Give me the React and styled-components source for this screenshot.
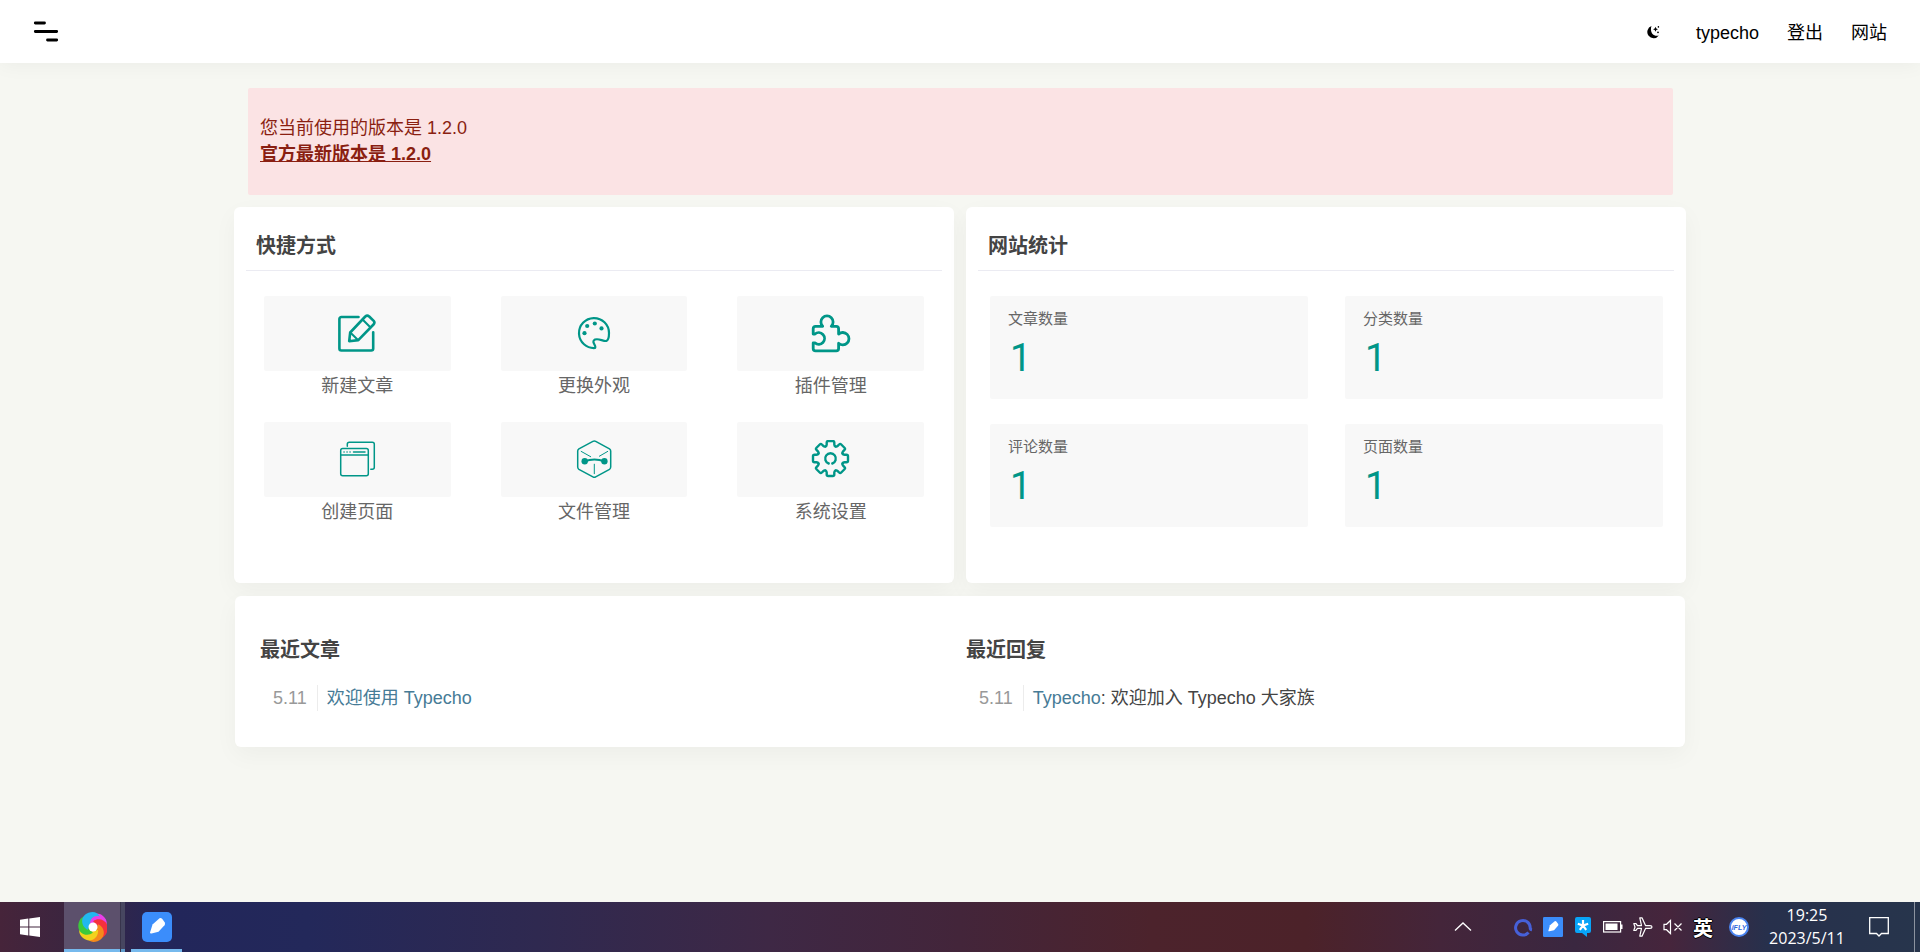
import styled, { createGlobalStyle } from "styled-components";

const GlobalStyle = createGlobalStyle`
  * {
    box-sizing: border-box;
  }

  body {
    margin: 0;
    background-color: #f6f7f2;
    color: #444;
    font-family: "Liberation Sans", Arial, "Noto Sans CJK SC", sans-serif;
    font-size: 18px;
    font-weight: 400;
    line-height: 26px;
  }

  a {
    text-decoration: none;
  }

  ul {
    margin: 0;
    padding: 0;
    list-style: none;
  }
`;

const Page = styled.div`
  display: flex;
  flex-direction: column;
  min-height: 100vh;
`;

// Top bar
const Header = styled.header`
  display: flex;
  align-items: center;
  justify-content: space-between;
  height: 63px;
  padding: 0 33px;
  background-color: #fff;
  color: #000;
  box-shadow: 0 1px 20px rgba(0, 0, 0, 0.05);
`;

const IconButton = styled.button`
  display: flex;
  align-items: center;
  justify-content: center;
  padding: 0;
  border: none;
  background: none;
  color: inherit;
  cursor: pointer;
`;

const Nav = styled.nav`
  display: flex;
  align-items: center;
  gap: 28px;

  a {
    padding-top: 2px;
    color: inherit;
  }

  button {
    margin-right: 8px;
  }
`;

// Content
const Main = styled.main`
  display: flex;
  flex: 1;
  flex-direction: column;
  gap: 12px;
  width: 100%;
  max-width: 1452px;
  margin: 0 auto;
  padding: 25px 0;
`;

const Notice = styled.div`
  margin: 0 13px 0 14px;
  padding: 27px 12px 28px;
  border-radius: 2px;
  background-color: #fbe3e4;
  color: #8a1f11;

  p {
    margin: 0;
  }

  a {
    color: inherit;
    font-weight: 700;
    text-decoration: underline;
  }
`;

const Columns = styled.div`
  display: grid;
  grid-template-columns: 1fr 1fr;
  gap: 12px;
`;

const Card = styled.section`
  padding: 12px 12px 56px;
  border-radius: 6px;
  background-color: #fff;
  box-shadow: 0 8px 25px rgba(0, 0, 0, 0.04);
`;

const CardTitle = styled.h3`
  margin: 0;
  padding: 14px 10px 11px;
  border-bottom: 1px solid #ebebf2;
  font-size: 20px;
  font-weight: 700;
`;

const Shortcuts = styled.ul`
  display: grid;
  grid-template-columns: repeat(3, 1fr);
  gap: 23px 50px;
  padding: 25px 18px 0;
`;

const Shortcut = styled.a`
  display: block;
  color: #666;
  text-align: center;
`;

const ShortcutIcon = styled.span`
  display: flex;
  align-items: center;
  justify-content: center;
  height: 75px;
  margin-bottom: 2px;
  border-radius: 2px;
  background-color: #f8f8f8;
  color: #009688;
`;

const Stats = styled.div`
  display: grid;
  grid-template-columns: 1fr 1fr;
  gap: 25px 37px;
  padding: 25px 11px 0 12px;
`;

const Stat = styled.div`
  height: 103px;
  padding: 10px 18px;
  border-radius: 2px;
  background-color: #f8f8f8;
`;

const StatLabel = styled.div`
  color: #666;
  font-size: 15px;
`;

const StatValue = styled.div`
  padding-left: 2px;
  color: #009688;
  font-family: Roboto, "Noto Sans", sans-serif;
  font-size: 38px;
  line-height: 52px;
`;

const RecentCard = styled(Card)`
  display: grid;
  grid-template-columns: 1fr 1fr;
  gap: 12px;
  margin: 1px 1px 0;
  padding: 41px 25px 36px;
`;

const RecentTitle = styled.h3`
  margin: 0 0 22px;
  font-size: 20px;
  font-weight: 700;
`;

const RecentItem = styled.li`
  display: flex;
  padding-left: 13px;

  time {
    margin-right: 9px;
    padding-right: 10px;
    border-right: 1px solid #ececec;
    color: #999;
  }

  a {
    color: #467b96;
  }
`;

// Desktop taskbar
const Taskbar = styled.footer`
  display: flex;
  justify-content: space-between;
  height: 50px;
  background: linear-gradient(
    90deg,
    #46243a 0%,
    #3a2540 4%,
    #22265a 9%,
    #23285a 16%,
    #2f2950 28%,
    #3e2845 40%,
    #43253a 50%,
    #4c232c 60%,
    #4c2229 68%,
    #44253a 75%,
    #3a2740 82%,
    #46253c 87%,
    #27304c 92%,
    #27354c 100%
  );
  color: #fff;
`;

const TaskGroup = styled.div`
  display: flex;
`;

const TaskButton = styled(IconButton)`
  width: ${(props) => props.$width}px;
  margin-right: ${(props) => props.$gap || 0}px;
  background-color: ${(props) => (props.$active ? "#5c506c" : "transparent")};
  box-shadow: ${(props) => (props.$running ? "inset 0 -3px #76b9ed" : "none")};
`;

const TaskEdge = styled.span`
  width: 5px;
  margin-right: 6px;
  border-left: 1px solid #38344c;
  background-color: #474660;
  box-shadow: inset 0 -3px #5f9bcb;
`;

const Tray = styled.div`
  display: flex;
  align-items: center;
`;

const TrayIcons = styled.div`
  display: flex;
  align-items: center;
  gap: 10px;
  margin-right: 16px;
`;

const TrayButton = styled(IconButton)`
  width: 20px;
  height: 50px;
  margin-right: ${(props) => props.$gap || 0}px;
`;

const InputMode = styled(TrayButton)`
  font-family: "Noto Sans CJK SC", sans-serif;
  font-size: 20px;
  font-weight: 700;
  text-shadow: 1px 0 #000, -1px 0 #000, 0 1px #000, 0 -1px #000;
`;

const Badge = styled.span`
  display: flex;
  align-items: center;
  justify-content: center;
  flex-shrink: 0;
  width: 20px;
  height: 20px;
  border: 2px solid #4a84f0;
  border-radius: 50%;
  background-color: #fff;
  color: #2f66dc;
  font-family: "Liberation Sans", Arial, sans-serif;
  font-size: 7px;
  font-style: italic;
  font-weight: 700;
`;

const Clock = styled.time`
  width: 84px;
  margin-right: 20px;
  font-family: "Open Sans", "Noto Sans", sans-serif;
  font-size: 16px;
  line-height: 23px;
  text-align: center;
`;

const ShowDesktop = styled.button`
  width: 6px;
  height: 50px;
  margin-left: 25px;
  padding: 0;
  border: none;
  border-left: 1px solid #8c939f;
  background: none;
`;

const LineIcon = styled.svg.attrs({ viewBox: "0 0 40 40" })`
  width: 40px;
  height: 40px;
  fill: none;
  stroke: currentColor;
  stroke-width: ${(props) => props.$weight || 2.4};
  stroke-linecap: round;
  stroke-linejoin: round;

  .solid {
    fill: currentColor;
    stroke: none;
  }
`;

const EditIcon = () => (
  <LineIcon $weight={2.6}>
    <path d="M21.500 3H4.400a2 2 0 0 0-2 2v29.500a2 2 0 0 0 2 2h29.800a2 2 0 0 0 2-2V18.200" />
    <path d="M12.200 27.200 13.200 18.500 28.300 2.500Q30.200.9 32.200 2.500L36.700 6.900Q38.200 8.700 36.500 10.500L21.300 26.100Z" />
    <path d="M25.800 5.700 33.300 13.300M13.800 19 21 26" strokeWidth="2" />
  </LineIcon>
);

const PaletteIcon = () => (
  <LineIcon $weight={2.2}>
    <path d="M21 34A15 15 0 1 1 35 19C35 23.500 33.800 26.500 32.300 27C29 27.400 24.500 24 21 25.600C16.500 27.800 23 32 21 34Z" />
    <g className="solid">
      <circle cx="10.500" cy="19.200" r="2.100" />
      <circle cx="13.200" cy="12" r="2.100" />
      <circle cx="20.800" cy="9.500" r="2.100" />
      <circle cx="27.500" cy="14.400" r="2.100" />
    </g>
  </LineIcon>
);

const PuzzleIcon = () => (
  <LineIcon $weight={2.8}>
    <path d="M4 20H2.200V14.700a2.400 2.400 0 0 1 2.400-2.400H11.700A6.100 6.100 0 1 1 20.300 12.300H25.200a2.400 2.400 0 0 1 2.400 2.400V20.100A6.200 6.200 0 1 1 27.600 29.300V34.500a2.400 2.400 0 0 1-2.400 2.400H4.600a2.400 2.400 0 0 1-2.400-2.400V28.900H4A5.800 5.800 0 1 0 4 20" />
  </LineIcon>
);

const WindowsIcon = () => (
  <LineIcon $weight={1.5}>
    <rect x="3.700" y="8.500" width="27.600" height="27.200" rx="2" />
    <path d="M3.700 14.900H31.300M16.500 11.900H28M7 11.900h.1M10 11.900h.1M13 11.900h.1" />
    <path d="M10.300 6.200V4.200a2 2 0 0 1 2-2H35.300a2 2 0 0 1 2 2V27.200a2 2 0 0 1-2 2H33.800" />
  </LineIcon>
);

const BoxIcon = () => (
  <LineIcon $weight={1.5}>
    <path d="M18.900 1.300Q20.300.5 21.700 1.300L35.500 8.900Q36.700 9.700 36.700 11.100V27.100Q36.700 28.500 35.500 29.300L21.700 36.900Q20.300 37.700 18.900 36.900L4.900 29.300Q3.700 28.500 3.700 27.100V11.100Q3.700 9.700 4.900 8.900Z" />
    <path d="M7.200 11.400 16.700 16.700M33.700 11.400 25.400 16.200M20.300 24.200V33.700" strokeWidth="1" />
    <path d="M10.700 21.200Q20.300 17.700 30.400 21.200" strokeWidth="2" />
    <circle className="solid" cx="10.700" cy="21.200" r="3.200" />
    <circle className="solid" cx="30.400" cy="21.200" r="3.200" />
  </LineIcon>
);

const GearIcon = () => (
  <LineIcon $weight={2.4}>
    <g transform="translate(19.500 18.500)">
      {[0, 45, 90, 135, 180, 225, 270, 315].map((angle) => (
        <path
          key={angle}
          transform={`rotate(${angle})`}
          d="M-5 -12Q-3.800 -12.500 -3.800 -14V-16Q-3.800 -17.500 -2.300 -17.500H2.300Q3.800 -17.500 3.800 -16V-14Q3.800 -12.500 5 -12"
        />
      ))}
      <path d="M-1.800 5A5.300 5.300 0 1 1 1.800 5" />
    </g>
  </LineIcon>
);

const MenuIcon = () => (
  <svg width="26" height="22" viewBox="0 0 26 22" fill="none" stroke="currentColor" strokeWidth="2.800" strokeLinecap="round">
    <path d="M2.300 2H11.500M2.300 10.500H23.700M14.500 19H23.700" />
  </svg>
);

const MoonIcon = () => (
  <svg width="14" height="14" viewBox="0 0 14 14" fill="currentColor">
    <path d="M5.500 1A6.300 6.300 0 1 0 12.800 10.500C7 12 3.500 6.500 5.500 1Z" />
    <path d="M9.500 1.800 10.300 3.500 12 4.300 10.300 5.100 9.500 6.800 8.700 5.100 7 4.300 8.700 3.500Z" />
    <circle cx="12" cy="7.300" r=".9" />
    <circle cx="12.400" cy="1.900" r=".8" />
  </svg>
);

const StartIcon = () => (
  <svg width="20" height="20" viewBox="0 0 20 20" fill="#fff">
    <path d="M0 2.800 8.300 1.600V9.400H0ZM9.300 1.400 20 0V9.400H9.300ZM0 10.500H8.300V18.400L0 17.200ZM9.300 10.500H20V20L9.300 18.500Z" />
  </svg>
);

const petals = ["#e83fe8", "#f5303c", "#f58a1c", "#f2d21c", "#3cc93c", "#22b8ee"];

const BrowserIcon = () => (
  <svg width="30" height="30" viewBox="-16 -15 30 30">
    {petals.map((color, i) => (
      <path
        key={color}
        transform={`rotate(${i * 60})`}
        fill={color}
        d="M-5 -3C-6 -11 3 -17 10 -11C14.500 -7 14.500 -3 12.500 .5C11 -5 6 -7 1 -4Z"
      />
    ))}
    <circle r="4.500" fill="#fff" />
  </svg>
);

const PenIcon = ({ size, radius }) => (
  <svg width={size} height={size} viewBox="0 0 30 30">
    <rect width="30" height="30" rx={radius} fill="#3b8dfb" />
    <path d="M8 20.500 10.500 12.500 17.500 6.200Q19 5.500 20.300 7L22.800 10.500Q23.500 12 22.500 13.200L16.500 19.800 9.500 21.500Q8 21.800 8 20.500Z" fill="#fff" />
  </svg>
);

const ChevronIcon = () => (
  <svg width="20" height="20" viewBox="0 0 20 20" fill="none" stroke="#fff" strokeWidth="1.300">
    <path d="M2 13.500 10 6 18 13.500" />
  </svg>
);

const RingIcon = () => (
  <svg width="20" height="20" viewBox="0 0 20 20" fill="none" stroke="#4660d8" strokeWidth="3">
    <path d="M15.500 15.500A7.300 7.300 0 1 1 17.200 10.500Q17 12.500 19 12.800" />
  </svg>
);

const StarIcon = () => (
  <svg width="20" height="20" viewBox="0 0 20 20">
    <path d="M4 0H16a2 2 0 0 1 2 2V14a2 2 0 0 1-2 2H14V20L9 16H4a2 2 0 0 1-2-2V2A2 2 0 0 1 4 0Z" fill="#08a4f8" />
    <path d="M10 3V8.500M4.800 6.800 10 8.500 15.200 6.800M6.800 12.800 10 8.500 13.200 12.800" fill="none" stroke="#fff" strokeWidth="2.200" />
  </svg>
);

const BatteryIcon = () => (
  <svg width="20" height="12" viewBox="0 0 20 12">
    <rect x=".6" y=".6" width="17" height="10.400" fill="none" stroke="#fff" strokeWidth="1.200" />
    <path d="M2.500 2.500H14.500V9H2.500ZM18 3.500H19.500V8H18Z" fill="#fff" />
  </svg>
);

const PlaneIcon = () => (
  <svg width="20" height="20" viewBox="0 0 20 20" fill="none" stroke="#fff" strokeWidth="1.200" strokeLinejoin="round">
    <path d="M19 10Q19 8.600 17 8.600H12.500L9 .8H6.800L8.500 8.600H4.500L2.800 6.500H.8L2 10 .8 13.500H2.800L4.500 11.400H8.500L6.800 19.200H9L12.500 11.400H17Q19 11.400 19 10Z" />
  </svg>
);

const MutedIcon = () => (
  <svg width="20" height="20" viewBox="0 0 20 20" fill="none" stroke="#fff" strokeWidth="1.200">
    <path d="M1 7.300H3.500L7.500 3.500V16.500L3.500 12.700H1ZM11.500 6.500 18.500 13.500M18.500 6.500 11.500 13.500" />
  </svg>
);

const MessageIcon = () => (
  <svg width="20" height="20" viewBox="0 0 20 20" fill="none" stroke="#fff" strokeWidth="1.300">
    <path d="M.7.7H19.300V16.500H12.500L10 19 7.500 16.500H.7Z" />
  </svg>
);

const shortcuts = [
  { label: "新建文章", icon: EditIcon },
  { label: "更换外观", icon: PaletteIcon },
  { label: "插件管理", icon: PuzzleIcon },
  { label: "创建页面", icon: WindowsIcon },
  { label: "文件管理", icon: BoxIcon },
  { label: "系统设置", icon: GearIcon },
];

const stats = [
  { label: "文章数量", value: 1 },
  { label: "分类数量", value: 1 },
  { label: "评论数量", value: 1 },
  { label: "页面数量", value: 1 },
];

const App = () => {
  return (
    <Page>
      <GlobalStyle />

      <Header>
        <IconButton aria-label="菜单">
          <MenuIcon />
        </IconButton>
        <Nav>
          <IconButton aria-label="夜间模式">
            <MoonIcon />
          </IconButton>
          <a href="#profile">typecho</a>
          <a href="#logout">登出</a>
          <a href="#site">网站</a>
        </Nav>
      </Header>

      <Main>
        <Notice>
          <p>您当前使用的版本是 1.2.0</p>
          <p>
            <a href="#release">官方最新版本是 1.2.0</a>
          </p>
        </Notice>

        <Columns>
          <Card>
            <CardTitle>快捷方式</CardTitle>
            <Shortcuts>
              {shortcuts.map(({ label, icon: Icon }) => (
                <li key={label}>
                  <Shortcut href="#shortcut">
                    <ShortcutIcon>
                      <Icon />
                    </ShortcutIcon>
                    {label}
                  </Shortcut>
                </li>
              ))}
            </Shortcuts>
          </Card>

          <Card>
            <CardTitle>网站统计</CardTitle>
            <Stats>
              {stats.map((stat) => (
                <Stat key={stat.label}>
                  <StatLabel>{stat.label}</StatLabel>
                  <StatValue>{stat.value}</StatValue>
                </Stat>
              ))}
            </Stats>
          </Card>
        </Columns>

        <RecentCard>
          <div>
            <RecentTitle>最近文章</RecentTitle>
            <ul>
              <RecentItem>
                <time>5.11</time>
                <a href="#post">欢迎使用 Typecho</a>
              </RecentItem>
            </ul>
          </div>
          <div>
            <RecentTitle>最近回复</RecentTitle>
            <ul>
              <RecentItem>
                <time>5.11</time>
                <span>
                  <a href="#comment">Typecho</a>: 欢迎加入 Typecho 大家族
                </span>
              </RecentItem>
            </ul>
          </div>
        </RecentCard>
      </Main>

      <Taskbar>
        <TaskGroup>
          <TaskButton $width={60} $gap={4} aria-label="开始">
            <StartIcon />
          </TaskButton>
          <TaskButton $width={56} $active $running aria-label="浏览器">
            <BrowserIcon />
          </TaskButton>
          <TaskEdge />
          <TaskButton $width={51} $running aria-label="编辑器">
            <PenIcon size={30} radius={5} />
          </TaskButton>
        </TaskGroup>

        <Tray>
          <TrayIcons>
            <TrayButton $gap={30} aria-label="显示隐藏的图标">
              <ChevronIcon />
            </TrayButton>
            <TrayButton aria-label="同步">
              <RingIcon />
            </TrayButton>
            <TrayButton aria-label="编辑器">
              <PenIcon size={20} radius={2} />
            </TrayButton>
            <TrayButton aria-label="消息">
              <StarIcon />
            </TrayButton>
            <TrayButton aria-label="电池">
              <BatteryIcon />
            </TrayButton>
            <TrayButton aria-label="飞行模式">
              <PlaneIcon />
            </TrayButton>
            <TrayButton aria-label="静音">
              <MutedIcon />
            </TrayButton>
            <InputMode $gap={6}>英</InputMode>
            <TrayButton aria-label="输入法">
              <Badge>iFLY</Badge>
            </TrayButton>
          </TrayIcons>
          <Clock>
            19:25
            <br />
            2023/5/11
          </Clock>
          <TrayButton aria-label="通知">
            <MessageIcon />
          </TrayButton>
          <ShowDesktop aria-label="显示桌面" />
        </Tray>
      </Taskbar>
    </Page>
  );
};

export default App;
